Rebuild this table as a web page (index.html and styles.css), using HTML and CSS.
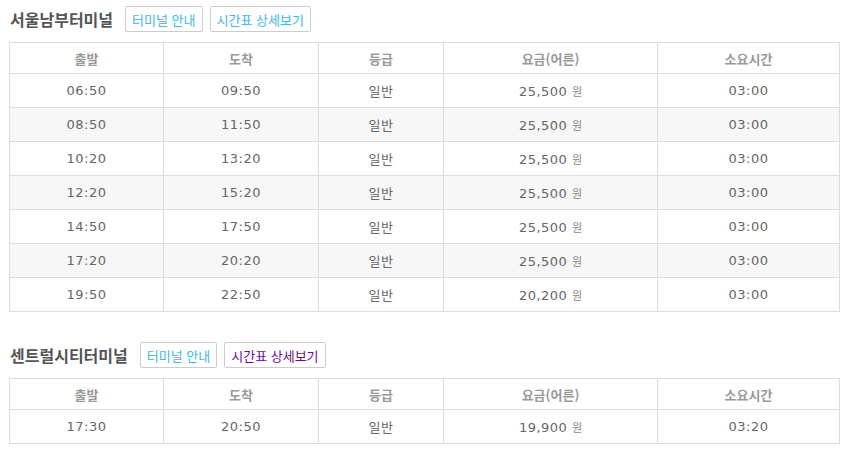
FILE: index.html
```html
<!DOCTYPE html>
<html lang="ko">
<head>
<meta charset="utf-8">
<link rel="stylesheet" href="styles.css">
</head>
<body>
<div class="page">
  <section class="terminal">
    <div class="terminal-head">
      <h2 class="terminal-name">서울남부터미널</h2>
      <a class="btn" href="#">터미널 안내</a>
      <a class="btn" href="#">시간표 상세보기</a>
    </div>
    <table class="schedule">
      <colgroup>
        <col class="c1"><col class="c2"><col class="c3"><col class="c4"><col class="c5">
      </colgroup>
      <thead>
        <tr><th>출발</th><th>도착</th><th>등급</th><th>요금(어른)</th><th>소요시간</th></tr>
      </thead>
      <tbody>
        <tr><td>06:50</td><td>09:50</td><td>일반</td><td>25,500 <span class="won">원</span></td><td>03:00</td></tr>
        <tr><td>08:50</td><td>11:50</td><td>일반</td><td>25,500 <span class="won">원</span></td><td>03:00</td></tr>
        <tr><td>10:20</td><td>13:20</td><td>일반</td><td>25,500 <span class="won">원</span></td><td>03:00</td></tr>
        <tr><td>12:20</td><td>15:20</td><td>일반</td><td>25,500 <span class="won">원</span></td><td>03:00</td></tr>
        <tr><td>14:50</td><td>17:50</td><td>일반</td><td>25,500 <span class="won">원</span></td><td>03:00</td></tr>
        <tr><td>17:20</td><td>20:20</td><td>일반</td><td>25,500 <span class="won">원</span></td><td>03:00</td></tr>
        <tr><td>19:50</td><td>22:50</td><td>일반</td><td>20,200 <span class="won">원</span></td><td>03:00</td></tr>
      </tbody>
    </table>
  </section>

  <section class="terminal second">
    <div class="terminal-head">
      <h2 class="terminal-name">센트럴시티터미널</h2>
      <a class="btn" href="#">터미널 안내</a>
      <a class="btn visited" href="#">시간표 상세보기</a>
    </div>
    <table class="schedule">
      <colgroup>
        <col class="c1"><col class="c2"><col class="c3"><col class="c4"><col class="c5">
      </colgroup>
      <thead>
        <tr><th>출발</th><th>도착</th><th>등급</th><th>요금(어른)</th><th>소요시간</th></tr>
      </thead>
      <tbody>
        <tr><td>17:30</td><td>20:50</td><td>일반</td><td>19,900 <span class="won">원</span></td><td>03:20</td></tr>
      </tbody>
    </table>
  </section>
</div>
</body>
</html>
```

FILE: styles.css
```css
html, body {
  margin: 0;
  padding: 0;
  background: #fff;
}

body {
  font-family: "DejaVu Sans", "Noto Sans CJK KR", sans-serif;
  font-size: 13px;
  color: #666;
}

.page {
  padding: 6px 0 0 9px;
}

.terminal.second {
  margin-top: 30px;
}

.terminal-head {
  display: flex;
  align-items: center;
  height: 26px;
  gap: 7px;
}

.terminal-name {
  margin: 0 5px 0 1px;
  font-family: "Noto Sans CJK KR", sans-serif;
  font-size: 16px;
  font-weight: bold;
  color: #555;
  line-height: 26px;
}

.btn {
  display: flex;
  align-items: center;
  box-sizing: border-box;
  height: 26px;
  padding: 0 6px;
  border: 1px solid #ccc;
  border-radius: 2px;
  font-family: "Noto Sans CJK KR", sans-serif;
  font-size: 13px;
  color: #41b8ea;
  text-decoration: none;
  background: #fff;
}

.btn.visited {
  color: #6b0c9b;
}

.schedule {
  margin-top: 10px;
  width: 830px;
  border-collapse: collapse;
  table-layout: fixed;
}

.c1 { width: 154px; }
.c2 { width: 155px; }
.c3 { width: 125px; }
.c4 { width: 214px; }
.c5 { width: 182px; }

.schedule th,
.schedule td {
  border: 1px solid #ddd;
  text-align: center;
  padding: 0;
}

.schedule th {
  height: 30px;
  font-family: "Noto Sans CJK KR", sans-serif;
  font-size: 13px;
  font-weight: bold;
  color: #999;
}

.schedule td {
  height: 33px;
  letter-spacing: 0.5px;
}

.schedule tbody tr:nth-child(even) td {
  background: #f7f7f7;
}

.won {
  font-family: "Noto Sans CJK KR", sans-serif;
  font-size: 11px;
  letter-spacing: 0;
  color: #888;
}
```
